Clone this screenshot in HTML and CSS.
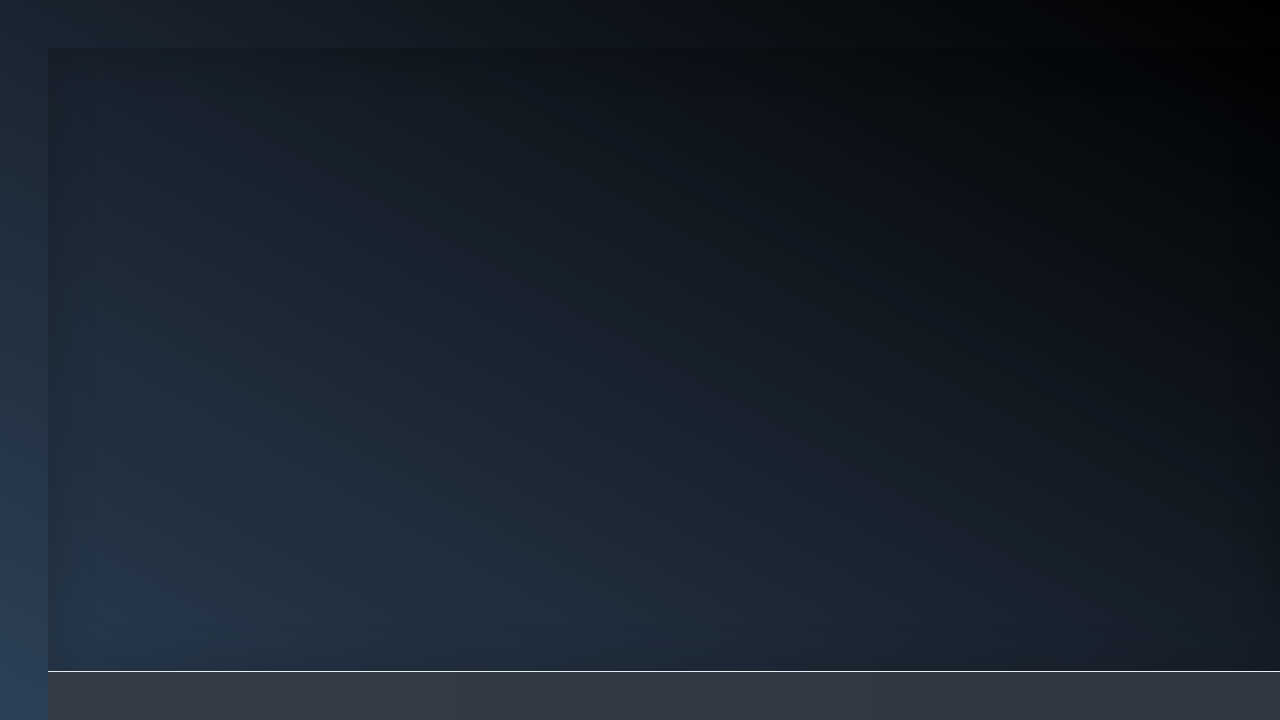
FILE: index.html
```html
<!DOCTYPE html>
<html>
<head>
<meta charset="utf-8">
<title>Stage</title>
<link rel="stylesheet" href="styles.css">
</head>
<body>
	<div id="app">
		<div class="stage"></div>
		<div class="footer"></div>
	</div>
</body>
</html>
```
FILE: styles.css
```css
*{margin: 0;padding: 0;box-sizing: border-box;}
html,body{
	width: 100%;
	height: 100%;
	overflow: hidden;
}
body{
	padding: 48px 0 0 48px;
	background: linear-gradient(to top right, #2c4157 0%, #1c2734 45%, #000 100%);
	font-family: "Liberation Sans", Arial, sans-serif;
}
#app{
	display: flex;
	flex-direction: column;
	height: 100%;
}
#app .stage{
	flex: 1;
	border-bottom: 1px solid #e6ebf0;
	background: rgba(0,0,0,.06);
	box-shadow: inset 0 0 50px rgba(0,0,0,.2);
}
#app .footer{
	height: 48px;
	background: linear-gradient(to right, #343c46, #2f3640);
}
```
